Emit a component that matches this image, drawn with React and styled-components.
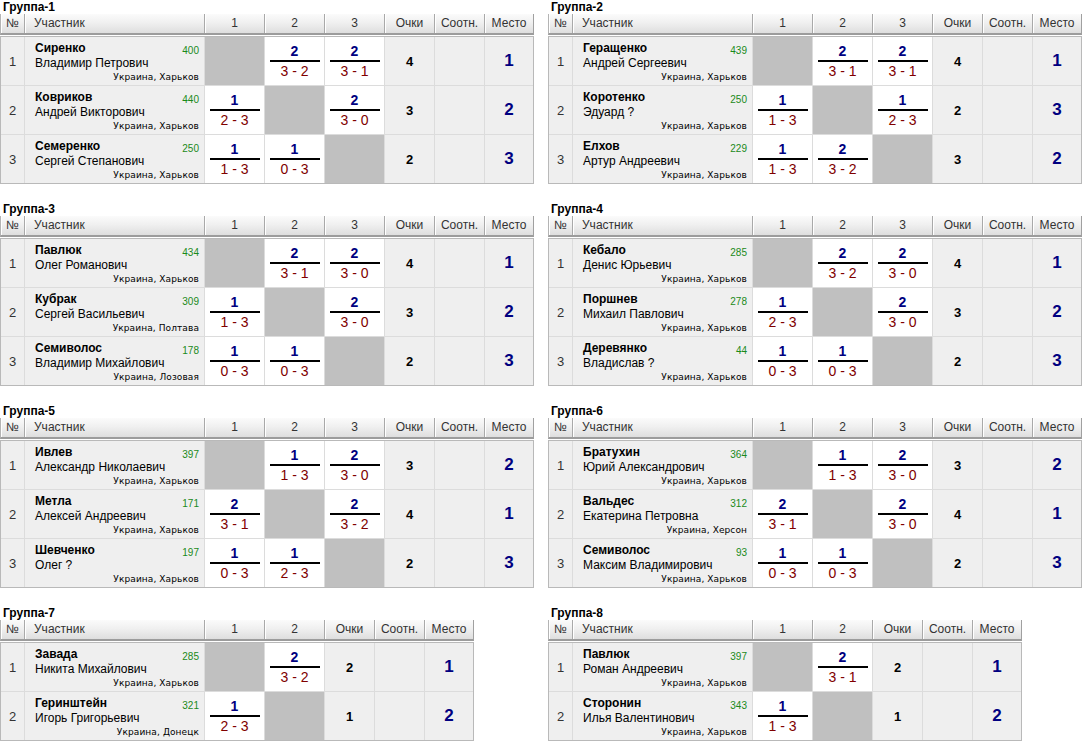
import React from "react";
import styled, { createGlobalStyle } from "styled-components";

const Global = createGlobalStyle`
  html, body { margin: 0; padding: 0; background: #fff; }
  body { font-family: "Liberation Sans", Arial, sans-serif; color: #000; }
`;

const groups = [
  {
    title: "Группа-1",
    players: [
      { s: "Сиренко", n: "Владимир Петрович", r: 400, c: "Украина, Харьков", g: [null, [2, "3 - 2"], [2, "3 - 1"]], p: 4, pl: 1 },
      { s: "Ковриков", n: "Андрей Викторович", r: 440, c: "Украина, Харьков", g: [[1, "2 - 3"], null, [2, "3 - 0"]], p: 3, pl: 2 },
      { s: "Семеренко", n: "Сергей Степанович", r: 250, c: "Украина, Харьков", g: [[1, "1 - 3"], [1, "0 - 3"], null], p: 2, pl: 3 },
    ],
  },
  {
    title: "Группа-2",
    players: [
      { s: "Геращенко", n: "Андрей Сергеевич", r: 439, c: "Украина, Харьков", g: [null, [2, "3 - 1"], [2, "3 - 1"]], p: 4, pl: 1 },
      { s: "Коротенко", n: "Эдуард ?", r: 250, c: "Украина, Харьков", g: [[1, "1 - 3"], null, [1, "2 - 3"]], p: 2, pl: 3 },
      { s: "Елхов", n: "Артур Андреевич", r: 229, c: "Украина, Харьков", g: [[1, "1 - 3"], [2, "3 - 2"], null], p: 3, pl: 2 },
    ],
  },
  {
    title: "Группа-3",
    players: [
      { s: "Павлюк", n: "Олег Романович", r: 434, c: "Украина, Харьков", g: [null, [2, "3 - 1"], [2, "3 - 0"]], p: 4, pl: 1 },
      { s: "Кубрак", n: "Сергей Васильевич", r: 309, c: "Украина, Полтава", g: [[1, "1 - 3"], null, [2, "3 - 0"]], p: 3, pl: 2 },
      { s: "Семиволос", n: "Владимир Михайлович", r: 178, c: "Украина, Лозовая", g: [[1, "0 - 3"], [1, "0 - 3"], null], p: 2, pl: 3 },
    ],
  },
  {
    title: "Группа-4",
    players: [
      { s: "Кебало", n: "Денис Юрьевич", r: 285, c: "Украина, Харьков", g: [null, [2, "3 - 2"], [2, "3 - 0"]], p: 4, pl: 1 },
      { s: "Поршнев", n: "Михаил Павлович", r: 278, c: "Украина, Харьков", g: [[1, "2 - 3"], null, [2, "3 - 0"]], p: 3, pl: 2 },
      { s: "Деревянко", n: "Владислав ?", r: 44, c: "Украина, Харьков", g: [[1, "0 - 3"], [1, "0 - 3"], null], p: 2, pl: 3 },
    ],
  },
  {
    title: "Группа-5",
    players: [
      { s: "Ивлев", n: "Александр Николаевич", r: 397, c: "Украина, Харьков", g: [null, [1, "1 - 3"], [2, "3 - 0"]], p: 3, pl: 2 },
      { s: "Метла", n: "Алексей Андреевич", r: 171, c: "Украина, Харьков", g: [[2, "3 - 1"], null, [2, "3 - 2"]], p: 4, pl: 1 },
      { s: "Шевченко", n: "Олег ?", r: 197, c: "Украина, Харьков", g: [[1, "0 - 3"], [1, "2 - 3"], null], p: 2, pl: 3 },
    ],
  },
  {
    title: "Группа-6",
    players: [
      { s: "Братухин", n: "Юрий Александрович", r: 364, c: "Украина, Харьков", g: [null, [1, "1 - 3"], [2, "3 - 0"]], p: 3, pl: 2 },
      { s: "Вальдес", n: "Екатерина Петровна", r: 312, c: "Украина, Херсон", g: [[2, "3 - 1"], null, [2, "3 - 0"]], p: 4, pl: 1 },
      { s: "Семиволос", n: "Максим Владимирович", r: 93, c: "Украина, Харьков", g: [[1, "0 - 3"], [1, "0 - 3"], null], p: 2, pl: 3 },
    ],
  },
  {
    title: "Группа-7",
    players: [
      { s: "Завада", n: "Никита Михайлович", r: 285, c: "Украина, Харьков", g: [null, [2, "3 - 2"]], p: 2, pl: 1 },
      { s: "Геринштейн", n: "Игорь Григорьевич", r: 321, c: "Украина, Донецк", g: [[1, "2 - 3"], null], p: 1, pl: 2 },
    ],
  },
  {
    title: "Группа-8",
    players: [
      { s: "Павлюк", n: "Роман Андреевич", r: 397, c: "Украина, Харьков", g: [null, [2, "3 - 1"]], p: 2, pl: 1 },
      { s: "Сторонин", n: "Илья Валентинович", r: 343, c: "Украина, Харьков", g: [[1, "1 - 3"], null], p: 1, pl: 2 },
    ],
  },
];

const Page = styled.div`
  display: grid;
  grid-template-columns: 534px 534px;
  column-gap: 14px;
  row-gap: 18px;
  align-items: start;
`;

const Group = styled.section`
  display: flex;
  flex-direction: column;
  align-items: flex-start;
`;

const Title = styled.div`
  height: 14px;
  line-height: 14px;
  padding-left: 3px;
  font-size: 12px;
  font-weight: bold;
  color: #000;
`;

const cols = (n) => `23px 179px repeat(${n}, 59px) 49px 49px 48px`;

const HeadRow = styled.div`
  display: grid;
  grid-template-columns: ${(p) => cols(p.$n)};
  column-gap: 1px;
  background: #a9a9a9;
  border-left: 1px solid #b4b4b4;
  border-right: 1px solid #a0a0a0;
  border-bottom: 2px solid #9c9c9c;
  height: 19px;
`;

const HeadCell = styled.div`
  background: linear-gradient(#fbfbfb 0%, #f0f0f0 45%, #dedede 100%);
  box-shadow: inset 1px 0 #ffffff;
  font-size: 12px;
  color: #333;
  line-height: 19px;
  text-align: ${(p) => (p.$left ? "left" : "center")};
  padding-left: ${(p) => (p.$left ? "9px" : "0")};
  white-space: nowrap;
  overflow: hidden;
`;

const Body = styled.div`
  margin-top: 1px;
  display: grid;
  grid-template-columns: ${(p) => cols(p.$n)};
  grid-auto-rows: 48px;
  gap: 1px;
  background: #dcdcdc;
  border: 1px solid #b9b9b9;
`;

const Cell = styled.div`
  background: #efefef;
  display: flex;
  align-items: center;
  justify-content: center;
`;

const NumCell = styled(Cell)`
  font-size: 13px;
  color: #333;
`;

const Empty = styled.div`
  background: #c0c0c0;
`;

const ScoreCell = styled(Cell)`
  background: #fff;
  flex-direction: column;
`;

const Won = styled.div`
  font-size: 14px;
  font-weight: bold;
  color: #000080;
  line-height: 16px;
  margin-bottom: 1px;
`;

const Bar = styled.div`
  width: 50px;
  height: 2px;
  background: #000;
`;

const Sets = styled.div`
  font-size: 14px;
  color: #800000;
  line-height: 16px;
  margin-top: 1px;
`;

const Points = styled(Cell)`
  font-size: 13px;
  font-weight: bold;
`;

const Place = styled(Cell)`
  font-size: 17px;
  font-weight: bold;
  color: #000080;
`;

const Player = styled.div`
  background: #efefef;
  padding: 4px 5px 0 10px;
  display: flex;
  flex-direction: column;
`;

const Line = styled.div`
  display: flex;
  justify-content: space-between;
  align-items: baseline;
  line-height: 14px;
`;

const Surname = styled.span`
  font-size: 12px;
  font-weight: bold;
`;

const Rating = styled.span`
  font-size: 10px;
  color: #1a8a1a;
  position: relative;
  top: 2px;
`;

const Given = styled.div`
  font-size: 12px;
  line-height: 14px;
`;

const City = styled.div`
  font-family: "DejaVu Sans", Verdana, sans-serif;
  font-size: 9px;
  line-height: 12px;
  text-align: right;
  margin-top: 1px;
  letter-spacing: 0.1px;
`;

function Table({ g }) {
  const n = g.players.length;
  return (
    <Group>
      <Title>{g.title}</Title>
      <HeadRow $n={n}>
        <HeadCell>№</HeadCell>
        <HeadCell $left>Участник</HeadCell>
        {g.players.map((_, i) => (
          <HeadCell key={i}>{i + 1}</HeadCell>
        ))}
        <HeadCell>Очки</HeadCell>
        <HeadCell>Соотн.</HeadCell>
        <HeadCell>Место</HeadCell>
      </HeadRow>
      <Body $n={n}>
        {g.players.map((p, i) => (
          <React.Fragment key={i}>
            <NumCell>{i + 1}</NumCell>
            <Player>
              <Line>
                <Surname>{p.s}</Surname>
                <Rating>{p.r}</Rating>
              </Line>
              <Given>{p.n}</Given>
              <City>{p.c}</City>
            </Player>
            {p.g.map((m, j) =>
              m ? (
                <ScoreCell key={j}>
                  <Won>{m[0]}</Won>
                  <Bar />
                  <Sets>{m[1]}</Sets>
                </ScoreCell>
              ) : (
                <Empty key={j} />
              )
            )}
            <Points>{p.p}</Points>
            <Cell />
            <Place>{p.pl}</Place>
          </React.Fragment>
        ))}
      </Body>
    </Group>
  );
}

export default function App() {
  return (
    <>
      <Global />
      <Page>
        {groups.map((g) => (
          <Table key={g.title} g={g} />
        ))}
      </Page>
    </>
  );
}
